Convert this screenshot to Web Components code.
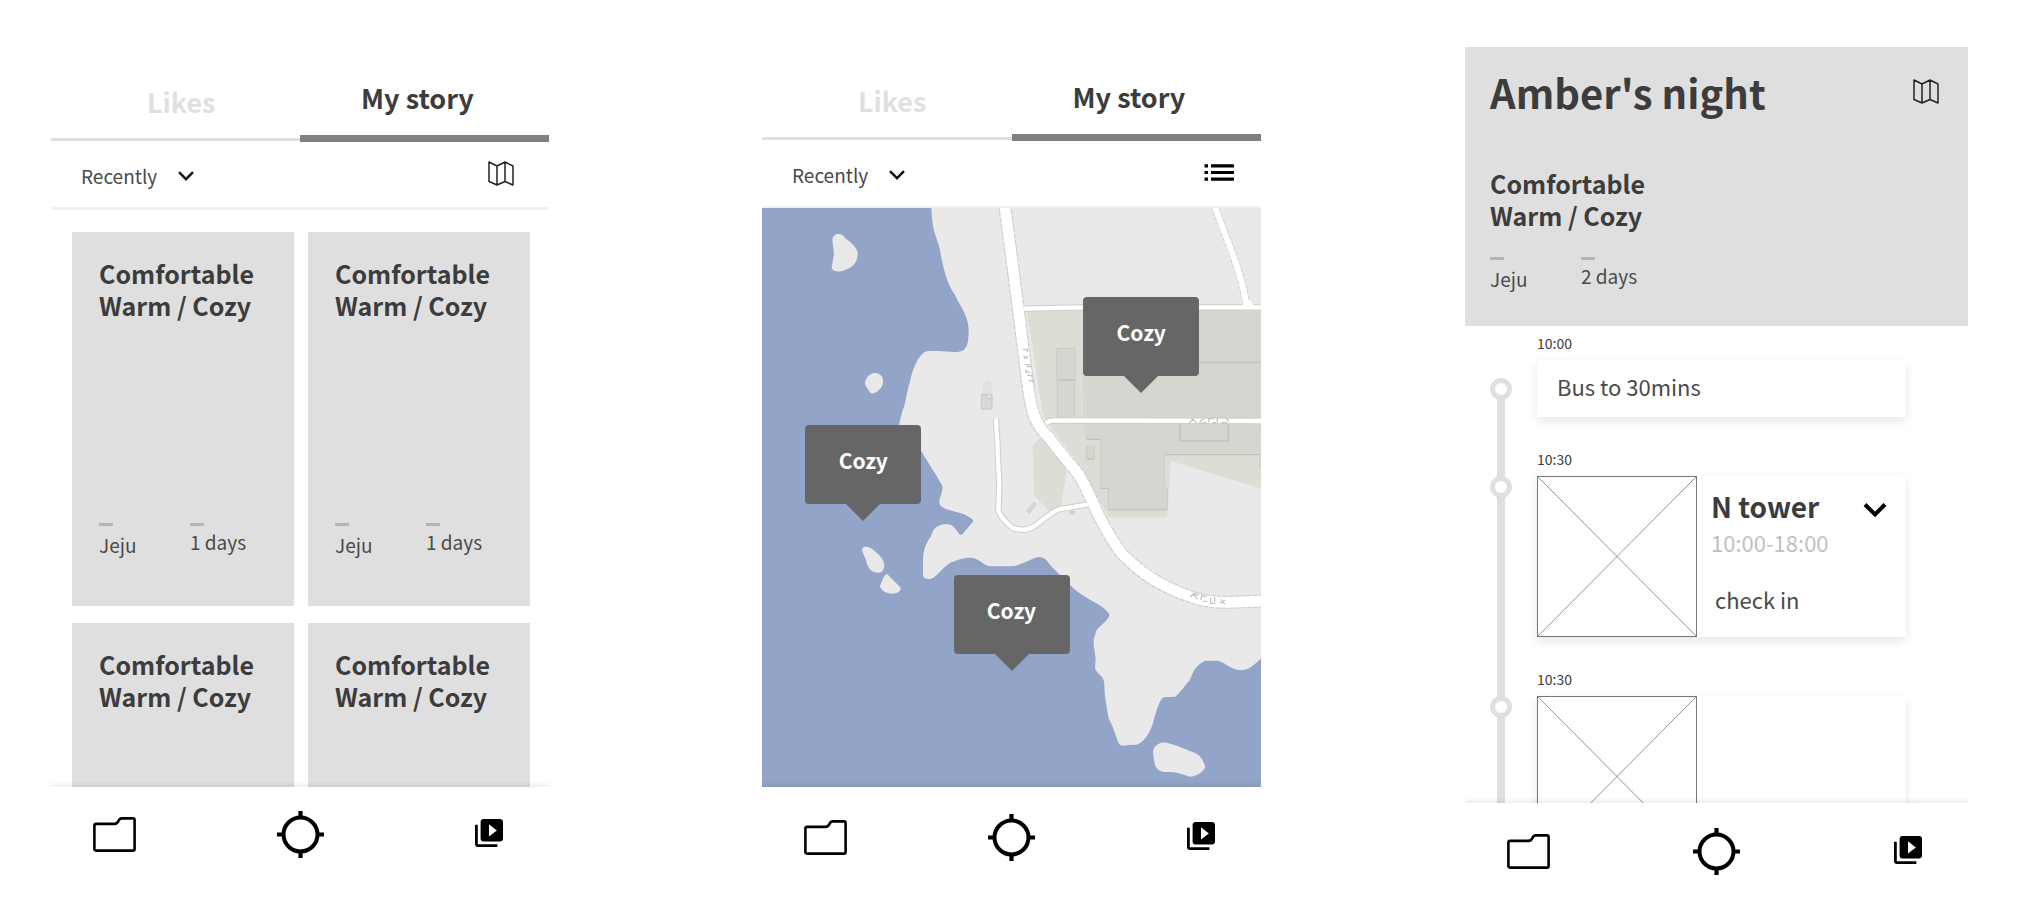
<!DOCTYPE html>
<html lang="en">
<head>
<meta charset="utf-8">
<meta name="viewport" content="width=device-width, initial-scale=1">
<title>Travel stories</title>
<style>
  html, body { margin: 0; }
  body {
    background: #fff;
    color: #3c3c3c;
    font-family: "Noto Sans CJK KR", "Noto Sans", sans-serif;
  }
</style>
</head>
<body>
<screen-board>
  <app-screen style="--top: 78px; --nav-top: 24px; --nav-bottom: 58px">
    <story-tabs slot="head"></story-tabs>
    <filter-bar slot="head" view="map"></filter-bar>
    <card-grid>
      <trip-card place="Jeju" days="1 days">Comfortable<br>Warm / Cozy</trip-card>
      <trip-card place="Jeju" days="1 days">Comfortable<br>Warm / Cozy</trip-card>
      <trip-card>Comfortable<br>Warm / Cozy</trip-card>
      <trip-card>Comfortable<br>Warm / Cozy</trip-card>
    </card-grid>
  </app-screen>

  <app-screen style="--top: 77px; --nav-top: 27px; --nav-bottom: 55px">
    <story-tabs slot="head"></story-tabs>
    <filter-bar slot="head" view="list"></filter-bar>
    <coast-map>
      <map-pin style="left: 76%; top: 32%">Cozy</map-pin>
      <map-pin style="left: 20.3%; top: 54%">Cozy</map-pin>
      <map-pin style="left: 50%; top: 80%">Cozy</map-pin>
    </coast-map>
  </app-screen>

  <app-screen style="--top: 47px; --nav-top: 25px; --nav-bottom: 41px">
    <trip-header slot="head" place="Jeju" days="2 days">
      <span slot="title">Amber's night</span>
      Comfortable<br>Warm / Cozy
    </trip-header>
    <time-line>
      <timeline-stop time="10:00" plain>Bus to 30mins</timeline-stop>
      <timeline-stop time="10:30" photo name="N tower" hours="10:00-18:00">check in</timeline-stop>
      <timeline-stop time="10:30" photo></timeline-stop>
    </time-line>
  </app-screen>
</screen-board>

<script>
const define = (name, render) => customElements.define(name, class extends HTMLElement {
  constructor() {
    super();
    this.attachShadow({ mode: 'open' });
  }
  connectedCallback() {
    const template = document.createElement('template');
    template.innerHTML = render(this);
    this.shadowRoot.replaceChildren(template.content.cloneNode(true));
  }
});

const icons = {
  map: ['0 0 26 25', 26, 25, '<path d="M1 1 9 5 17 1 25 5V24L17 20.500 9 24 1 20.500ZM9 5V24M17 1V20.500" fill="none" stroke="#222" stroke-width="1.500" stroke-linejoin="round"/>'],
  list: ['0 0 30 17', 30, 17, '<path d="M7 1.800H30M7 8.500H30M7 15.200H30" stroke="#000" stroke-width="3.200"/><path d="M.5 1.800H4M.5 8.500H4M.5 15.200H4" stroke="#000" stroke-width="3.200"/>'],
  chevron: ['0 0 16 10', 16, 10, '<path d="M1 1.200 8 8.200 15 1.200" fill="none" stroke="#111" stroke-width="2.400"/>'],
  expand: ['0 0 24 28', 24, 28, '<path d="M2 8.500 12 18.500 22 8.500" fill="none" stroke="#000" stroke-width="4"/>'],
  folder: ['0 0 43 35', 43, 35, '<path d="M3 6.900H21.500C26.500 6.700 24.500 1.500 28.500 1.400H40Q41.600 1.400 41.600 3V32Q41.600 33.600 40 33.600H3Q1.400 33.600 1.400 32V8.500Q1.400 6.900 3 6.900Z" fill="none" stroke="#000" stroke-width="2.600"/>'],
  locate: ['0 0 47 47', 47, 47, '<circle cx="23.500" cy="23.500" r="17" fill="none" stroke="#000" stroke-width="4"/><path d="M23.500 0V7M23.500 40V47M0 23.500H7M40 23.500H47" stroke="#000" stroke-width="4.200"/>'],
  library: ['2 2 20 22', 28, 31, '<path d="M4 6H2v14c0 1.100.9 2 2 2h14v-2H4V6zm16-4H8c-1.100 0-2 .9-2 2v12c0 1.100.9 2 2 2h12c1.100 0 2-.9 2-2V4c0-1.100-.9-2-2-2zm-8 12.500v-8.800l5.600 4.400-5.600 4.400z"/>']
};

define('ui-icon', el => {
  const [box, w, h, body] = icons[el.getAttribute('name')];
  return `<style>:host { display: block; flex: none; } svg { display: block; }</style>
    <svg viewBox="${box}" width="${w}" height="${h}" aria-hidden="true">${body}</svg>`;
});

/* Three phone screens side by side; every gap and screen is a share of the window. */
define('screen-board', () => `
  <style>
    :host {
      display: grid;
      grid-template-columns: 51fr 498fr 213fr 499fr 204fr 503fr 58fr;
      height: 100vh;
    }
    ::slotted(app-screen:nth-child(1)) { grid-column: 2; }
    ::slotted(app-screen:nth-child(2)) { grid-column: 4; }
    ::slotted(app-screen:nth-child(3)) { grid-column: 6; }
  </style>
  <slot></slot>`);

define('app-screen', () => `
  <style>
    :host {
      display: flex;
      flex-direction: column;
      min-width: 0;
      min-height: 0;
      box-sizing: border-box;
      padding-top: var(--top);
    }
    main { flex: 1; min-height: 0; overflow: hidden; }
  </style>
  <slot name="head"></slot>
  <main><slot></slot></main>
  <bottom-nav></bottom-nav>`);

define('story-tabs', () => `
  <style>
    :host { display: grid; grid-template-columns: 1fr 1fr; align-items: start; }
    button {
      box-sizing: border-box;
      margin: 0;
      border: 0;
      background: none;
      color: #e0e0e0;
      font: 700 27px/40px "Noto Sans CJK KR", "Noto Sans", sans-serif;
      text-align: left;
      padding: 4px 0 16px 96px;
      border-bottom: 3px solid #e0e0e0;
    }
    button[aria-selected="true"] {
      color: #3c3c3c;
      padding: 0 0 17px 61px;
      border-bottom: 7px solid #808080;
    }
  </style>
  <button role="tab" aria-selected="false">Likes</button>
  <button role="tab" aria-selected="true">My story</button>`);

define('filter-bar', el => {
  const view = el.getAttribute('view');
  return `
  <style>
    :host {
      display: flex;
      align-items: center;
      justify-content: space-between;
      height: 65px;
      padding: 0 ${view === 'map' ? '35px' : '27px'} 0 30px;
      border-bottom: ${view === 'map' ? '3px' : '2px'} solid #f2f2f2;
    }
    label { display: flex; align-items: center; padding-top: 2px; }
    select {
      appearance: none;
      margin: 0 -16px 0 0;
      padding: 0 36px 0 0;
      border: 0;
      background: none;
      color: #4a4a4a;
      font: 400 19px/28px "Noto Sans CJK KR", "Noto Sans", sans-serif;
    }
    ui-icon { pointer-events: none; }
    button { margin: 0; padding: 0 0 3px; border: 0; background: none; }
  </style>
  <label><select aria-label="Sort by"><option>Recently</option></select><ui-icon name="chevron"></ui-icon></label>
  <button aria-label="Show as ${view}"><ui-icon name="${view}"></ui-icon></button>`;
});

define('card-grid', () => `
  <style>
    :host {
      display: grid;
      grid-template-columns: 1fr 1fr;
      gap: 17px 14px;
      padding: 22px 19px 0 21px;
    }
  </style>
  <slot></slot>`);

define('trip-meta', el => `
  <style>
    :host { display: grid; grid-template-columns: 91px auto; color: #4a4a4a; font-size: 19px; }
    span::before { content: ""; display: block; width: 14px; height: 3px; background: #b5b5b5; }
    .place { line-height: 38px; }
    .days { line-height: 32px; }
  </style>
  <span class="place">${el.getAttribute('place')}</span>
  <span class="days">${el.getAttribute('days')}</span>`);

define('trip-card', el => `
  <style>
    :host {
      display: flex;
      flex-direction: column;
      justify-content: space-between;
      box-sizing: border-box;
      aspect-ratio: 222 / 374;
      padding: 25px 0 42px 27px;
      background: #dfdfdf;
    }
    h2 { margin: 0; font-size: 25px; line-height: 32px; font-weight: 700; }
  </style>
  <h2><slot></slot></h2>
  ${el.hasAttribute('place')
    ? `<trip-meta place="${el.getAttribute('place')}" days="${el.getAttribute('days')}"></trip-meta>`
    : ''}`);

define('bottom-nav', () => `
  <style>
    :host {
      display: block;
      position: relative;
      background: #fff;
      box-shadow: 0 -2px 5px rgba(0, 0, 0, .09);
      clip-path: inset(-8px 0 0 0);
    }
    nav {
      display: grid;
      grid-template-columns: 1fr auto 1fr;
      align-items: center;
      padding: var(--nav-top) 42px var(--nav-bottom);
    }
    a { color: #000; }
    a:last-child { justify-self: end; padding-right: 4px; }
  </style>
  <nav>
    <a href="#stories" aria-label="Stories"><ui-icon name="folder"></ui-icon></a>
    <a href="#nearby" aria-label="Nearby"><ui-icon name="locate"></ui-icon></a>
    <a href="#library" aria-label="Library"><ui-icon name="library"></ui-icon></a>
  </nav>`);

define('map-pin', () => `
  <style>
    :host {
      position: absolute;
      display: flex;
      flex-direction: column;
      align-items: center;
      transform: translate(-50%, -100%);
    }
    button {
      width: 116px;
      margin: 0;
      padding: 15px 0 24px;
      border: 0;
      border-radius: 4px;
      background: #666;
      color: #fff;
      font: 700 21px/40px "Noto Sans CJK KR", "Noto Sans", sans-serif;
    }
    i { border: 17px solid transparent; border-top-color: #666; border-bottom: 0; }
  </style>
  <button><slot></slot></button><i></i>`);

define('coast-map', () => `
  <style>
    :host { display: block; position: relative; height: 100%; background: #92a4c7; overflow: hidden; }
    svg { display: block; width: 100%; height: 100%; }
    .land { fill: #e9e9e9; }
    .park { fill: #dbded5; }
    .block { fill: #d5d6cf; }
    .wall { fill: none; stroke: #c0c1bb; stroke-width: 4; }
    .edge { fill: none; stroke: #cdcdcb; }
    .road { fill: none; stroke: #fff; }
    .mark { fill: none; stroke: #c4c4c4; stroke-width: 4; }
  </style>
  <svg viewBox="36 414 1497 1737" preserveAspectRatio="xMidYMid slice" role="img" aria-label="Map of the coast">
    <path class="land" d="M543 400 546 445C550 490 560 500 570 540C578 590 590 640 615 675L622 690C640 720 657 750 656 785C655 830 648 848 610 846C570 843 545 842 530 844C508 850 488 895 480 935C468 970 468 1000 458 1020L448 1060C446 1095 490 1110 516 1147C545 1195 565 1225 577 1248C580 1265 566 1285 568 1300C572 1318 600 1319 640 1332C660 1342 672 1348 669 1355L637 1393C628 1400 624 1382 615 1376C608 1360 580 1360 565 1368C550 1375 548 1385 543 1398C520 1430 518 1455 519 1490V1515C520 1530 540 1528 550 1523C570 1510 585 1485 605 1477C635 1464 650 1463 665 1463C690 1467 700 1485 720 1489H785C810 1487 840 1467 865 1461C885 1460 890 1472 905 1490L935 1520C970 1555 985 1568 1005 1580C1040 1602 1062 1608 1078 1633C1080 1648 1045 1670 1038 1684C1035 1700 1030 1705 1031 1725L1037 1765 1035 1795C1042 1815 1060 1815 1063 1840C1063 1880 1070 1910 1076 1945L1087 1968 1104 2015C1110 2030 1120 2028 1135 2025L1160 2024C1190 2012 1205 1975 1210 1955C1220 1920 1230 1885 1242 1882L1275 1880C1290 1870 1305 1845 1318 1832C1330 1810 1330 1790 1365 1772H1405C1430 1780 1445 1800 1470 1800C1500 1800 1510 1785 1540 1760V400Z"/>
    <g class="land">
      <path d="M247 510C248 490 270 488 280 497C285 508 323 525 323 550C323 580 305 592 290 598C275 608 245 607 245 590L252 553Z"/>
      <path d="M345 938C350 915 365 908 380 909C400 915 402 930 397 947C385 965 370 975 360 968C355 955 345 950 345 938Z"/>
      <path d="M337 1445C335 1430 345 1428 360 1433C380 1445 400 1465 403 1482C403 1502 395 1510 380 1508C360 1505 352 1490 348 1470Z"/>
      <path d="M390 1548C398 1530 402 1512 412 1513L451 1552C455 1562 445 1570 430 1571C405 1570 392 1560 390 1548Z"/>
      <path d="M1209 2045C1213 2020 1235 2017 1250 2018C1280 2025 1300 2035 1330 2047C1355 2055 1362 2080 1366 2090C1360 2107 1335 2120 1320 2120C1290 2110 1280 2105 1240 2106C1212 2098 1213 2080 1209 2045Z"/>
    </g>
    <path class="park" d="M830 720H1540V1258L1262 1173 1252 1342H1075L1000 1200 880 1040ZM848 1125 875 1100 930 1170 950 1205 932 1317 895 1322 852 1274Z"/>
    <path class="block" d="M1003 720H1540V1153H1243V1255H1252V1318H1075V1255H1050V1107H1010Z"/>
    <path class="block" d="M920 835H975V930H973V1042H922V930H920ZM1010 1130H1033V1167H1010Z"/>
    <path d="M1003 720V1050L1010 1107" fill="none" stroke="#c9cac4" stroke-width="2"/>
    <path class="wall" d="M1340 877H1540M1010 1108H1052M1290 1060V1113H1435V1060M1532 1154H1243M1075 1319H1252M920 930H975M1010 1167H1033M1050 1255H1075"/>
    <path d="M920 930V835H975V930M922 930V1042M974 930V1042M1010 1165V1130H1033V1165M1052 1108V1255M1075 1255V1318M1244 1154V1250M1252 1255V1318M1530 1154V1200" fill="none" stroke="#c6c7c0" stroke-width="2.500"/>
    <path d="M700 940 712 930 725 940V970H698Z" fill="#e1e1e1"/>
    <path d="M695 973H726V1017H695ZM710 973V985H726M831 1322 852 1297 858 1303 838 1329ZM961 1325H973V1331H961Z" fill="#d9d9d9" stroke="#c5c5c5" stroke-width="3"/>
    <g class="edge" stroke-width="19">
      <path d="M738 1045C739 1090 744 1110 743 1150L748 1245 745 1320C750 1340 775 1365 790 1375C815 1382 835 1380 850 1370C880 1350 905 1325 930 1317L1015 1303"/>
      <path d="M1393 405 1420 480C1450 555 1475 620 1490 705" stroke-width="23" stroke-dasharray="12 5"/>
      <path d="M820 716 1000 712H1540M888 1060Q895 1052 915 1051L1540 1053"/>
    </g>
    <path class="edge" stroke-width="39" stroke-dasharray="14 4" d="M764 405 795 640 828 900C840 1010 850 1060 895 1100C935 1155 970 1190 990 1220C1010 1255 1030 1300 1045 1335C1070 1380 1100 1440 1130 1465C1165 1500 1200 1525 1240 1545C1310 1580 1360 1597 1430 1597L1540 1593"/>
    <g class="road" stroke-width="13">
      <path d="M738 1045C739 1090 744 1110 743 1150L748 1245 745 1320C750 1340 775 1365 790 1375C815 1382 835 1380 850 1370C880 1350 905 1325 930 1317L1015 1303"/>
      <path d="M1393 405 1420 480C1450 555 1475 620 1490 705" stroke-width="18"/>
      <path d="M820 716 1000 712H1540M888 1060Q895 1052 915 1051L1540 1053"/>
      <path stroke-width="32" d="M764 405 795 640 828 900C840 1010 850 1060 895 1100C935 1155 970 1190 990 1220C1010 1255 1030 1300 1045 1335C1070 1380 1100 1440 1130 1465C1165 1500 1200 1525 1240 1545C1310 1580 1360 1597 1430 1597L1540 1593"/>
    </g>
    <path d="M1478 706 1482 690 1500 690 1512 706Z" fill="#fff"/>
    <g class="mark">
      <path d="M818 838H832V846M820 858 834 866M822 866 834 858M824 884H842M830 890H846M828 898V906H840M832 916H846V924M836 932H850V940"/>
      <path d="M1318 1058 1332 1046M1324 1046 1340 1058M1348 1058 1362 1044M1376 1056V1046H1392M1402 1044V1058M1414 1058H1432M1428 1044 1436 1054M1358 1058H1370M1388 1058H1398"/>
      <path d="M1320 1580 1338 1570M1328 1568 1342 1588M1352 1590 1356 1576 1370 1580M1382 1584V1600H1396M1394 1582V1596M1410 1600 1426 1590M1412 1588 1424 1602M1336 1574H1348M1360 1594H1372"/>
    </g>
  </svg>
  <slot></slot>`);

define('trip-header', el => `
  <style>
    :host { display: block; padding: 21px 29px 28px 25px; background: #dfdfdf; }
    header { display: flex; align-items: center; justify-content: space-between; }
    h1 { margin: 0; font-size: 40px; line-height: 48px; font-weight: 700; }
    h2 { margin: 51px 0 26px; font-size: 25px; line-height: 32px; font-weight: 700; }
    button { margin: 0; padding: 0 0 2px; border: 0; background: none; }
  </style>
  <header>
    <h1><slot name="title"></slot></h1>
    <button aria-label="Show on map"><ui-icon name="map"></ui-icon></button>
  </header>
  <h2><slot></slot></h2>
  <trip-meta place="${el.getAttribute('place')}" days="${el.getAttribute('days')}"></trip-meta>`);

define('time-line', () => `
  <style>
    :host { display: flex; flex-direction: column; gap: 32px; padding: 7px 62px 0 0; }
  </style>
  <slot></slot>`);

/* A stop draws its own stretch of the rail, down to the next stop. */
define('timeline-stop', el => {
  const plain = el.hasAttribute('plain');
  const name = el.getAttribute('name');
  return `
  <style>
    :host { display: grid; grid-template-columns: 72px 1fr; position: relative; }
    :host::before {
      content: "";
      position: absolute;
      left: 32px;
      width: 8px;
      top: ${plain ? '60px' : '0'};
      bottom: -32px;
      background: #dfdfdf;
    }
    time { grid-column: 2; padding-bottom: 7px; font-size: 14px; line-height: 20px; }
    .marker {
      position: relative;
      box-sizing: border-box;
      width: 22px;
      height: 22px;
      margin-left: 25px;
      border: 5px solid #dfdfdf;
      border-radius: 50%;
      background: #fff;
      align-self: ${plain ? 'center' : 'start'};
    }
    article {
      position: relative;
      display: flex;
      background: #fff;
      box-shadow: 0 4px 10px rgba(0, 0, 0, .1);
      color: #4a4a4a;
      font-size: 22px;
      line-height: 36px;
    }
    .plain { padding: 8px 20px 13px; }
    .photo { flex: none; display: block; width: 160px; height: 161px; }
    .info { flex: 1; padding: 12px 19px 0 14px; }
    .info header { display: flex; align-items: flex-end; justify-content: space-between; }
    h3 { margin: 0; color: #3c3c3c; font-size: 28px; font-weight: 700; line-height: 36px; }
    .hours { margin: 0 0 21px; color: #c0c0c0; }
    .note { margin: 0; padding-left: 4px; }
    button { margin: 0; padding: 0; border: 0; background: none; }
  </style>
  <time>${el.getAttribute('time')}</time>
  <span class="marker"></span>
  ${plain ? '<article class="plain"><slot></slot></article>' : `
  <article>
    <svg class="photo" viewBox="0 0 160 161" role="img" aria-label="Photo">
      <rect x=".5" y=".5" width="159" height="160" fill="#fff" stroke="#777"/>
      <path d="M1 1 159 160M159 1 1 160" stroke="#777" stroke-width=".8"/>
    </svg>
    <div class="info">${name ? `
      <header><h3>${name}</h3><button aria-label="More"><ui-icon name="expand"></ui-icon></button></header>
      <p class="hours">${el.getAttribute('hours')}</p>
      <p class="note"><slot></slot></p>` : ''}
    </div>
  </article>`}`;
});
</script>
</body>
</html>
